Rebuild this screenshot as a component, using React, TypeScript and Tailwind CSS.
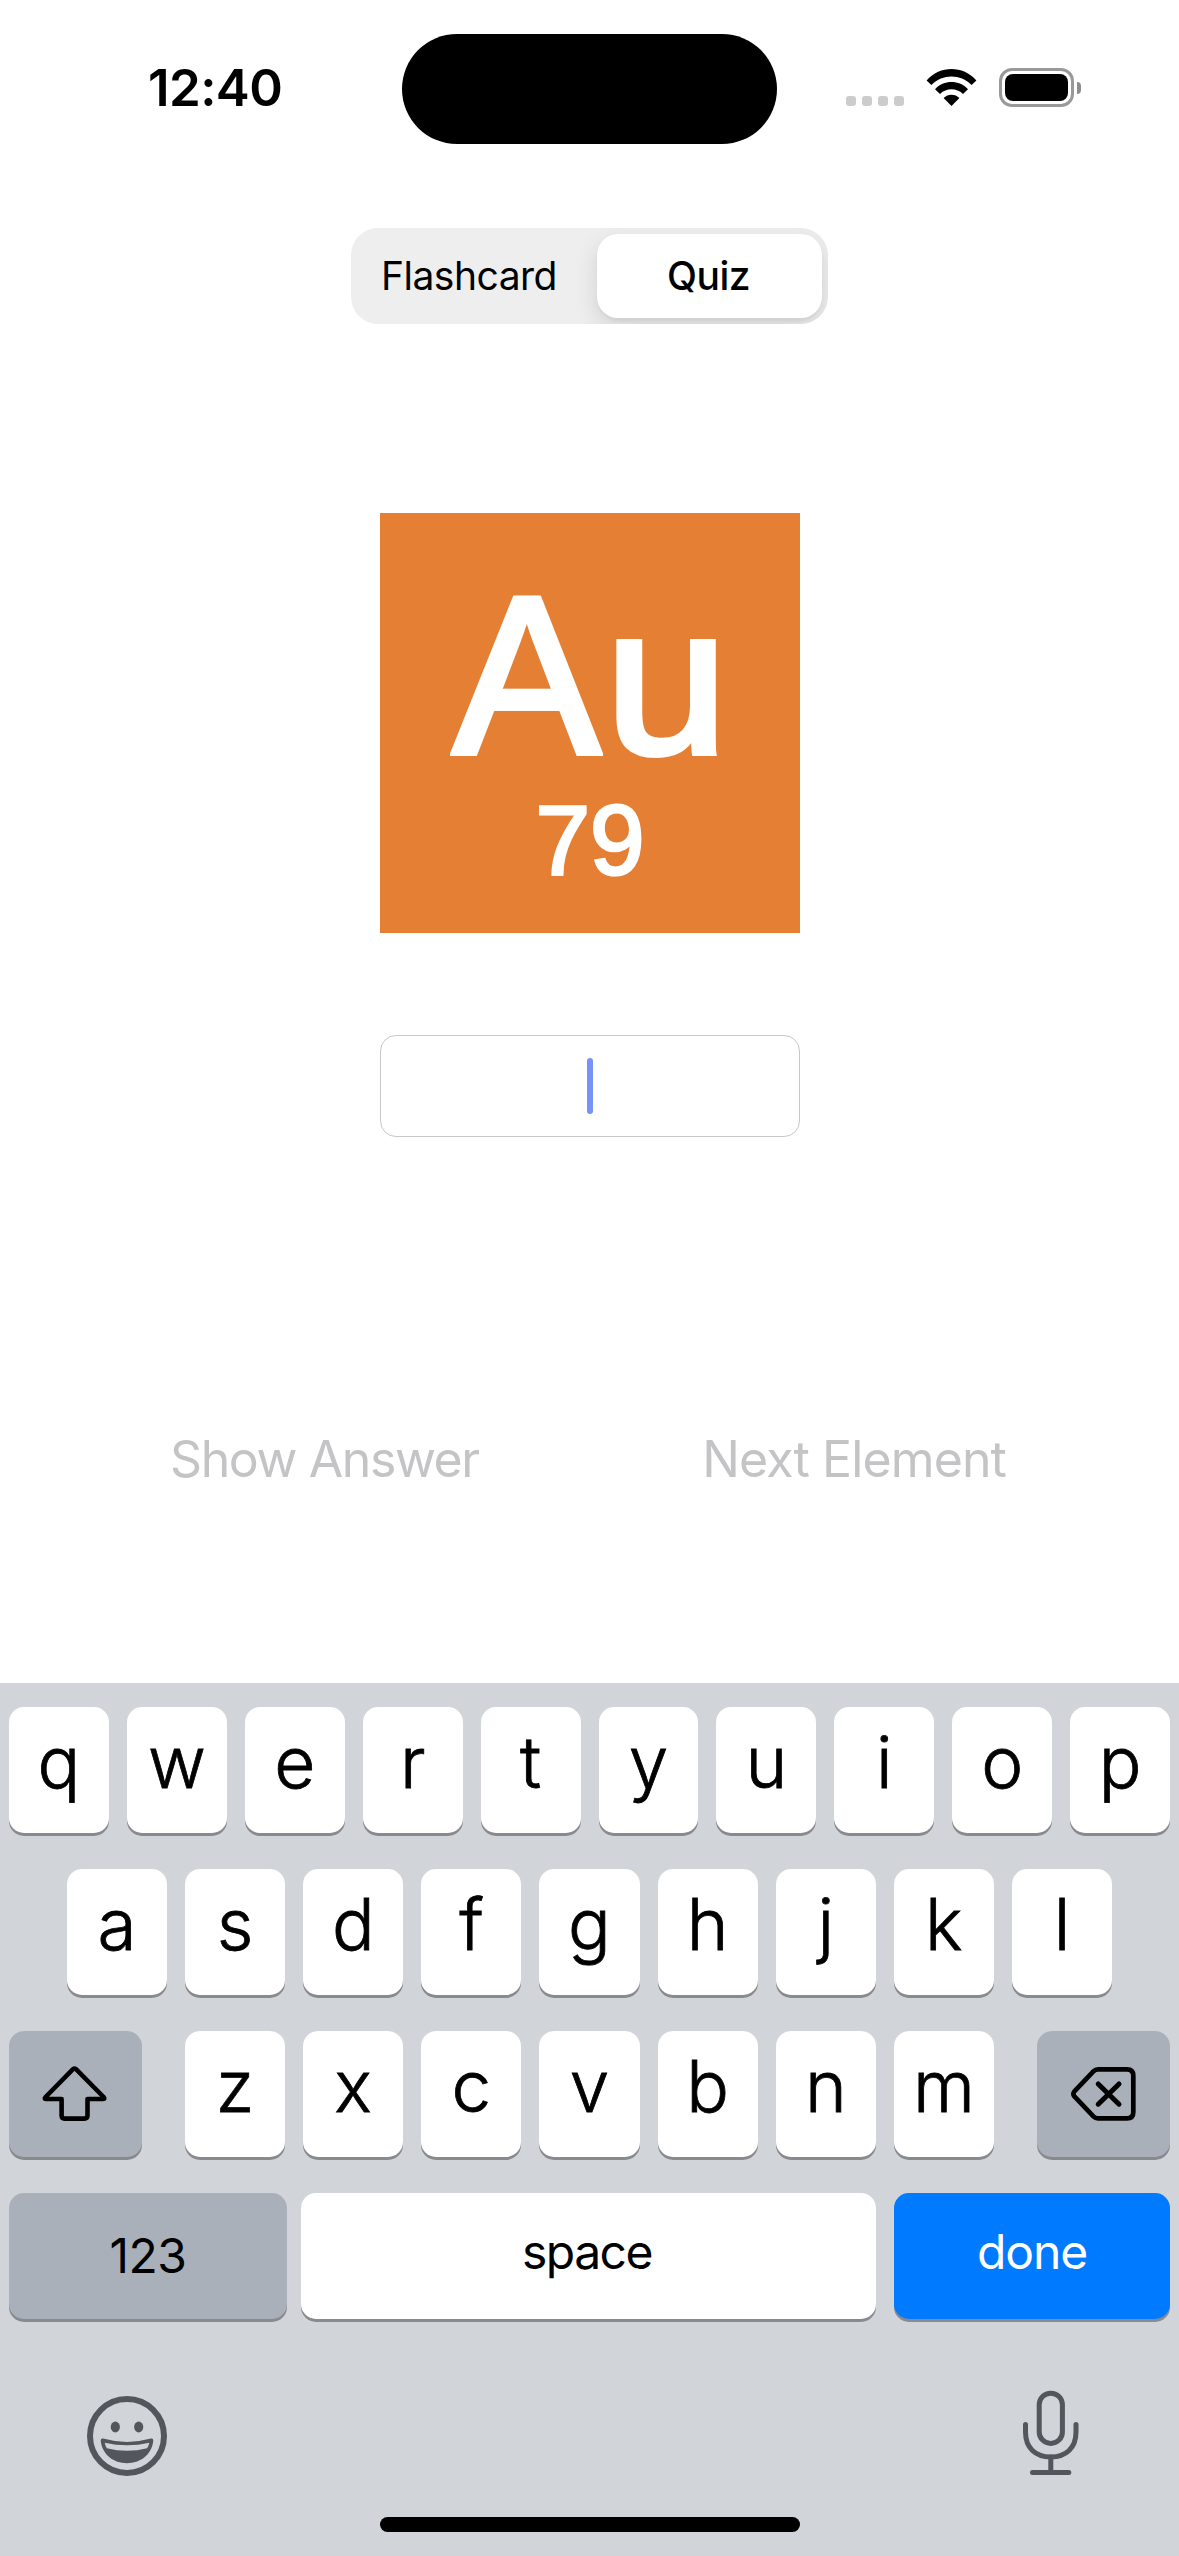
import type { ReactNode } from 'react';

function StatusBar() {
  return (
    <div className="flex h-[178px] shrink-0 items-start justify-between pl-[148px] pr-[98px] pt-[33px]">
      <div className="h-[109px] w-[254px] text-[51px] font-semibold leading-[109px] tracking-[-0.6px]">12:40</div>
      <div className="mt-px h-[110px] w-[375px] rounded-full bg-black" />
      <div className="flex h-[109px] w-[304px] items-center justify-end">
        <div className="mr-[22px] flex gap-[6px] pt-[27px]">
          {[0, 1, 2, 3].map((dot) => (
            <div key={dot} className="size-[10px] rounded-[3px] bg-[#cccccc]" />
          ))}
        </div>
        <svg className="mr-[22px] h-[37px] w-[51px]" viewBox="0 0 51 37">
          <path d="M0.600 11.400 C14 -3.800 37 -3.800 50.400 11.400 L45.600 16 C34.200 4.800 16.800 4.800 5.400 16 Z" />
          <path d="M9 20.200 C17.600 10.600 33.400 10.600 42 20.200 L37 25 C30.400 18.800 20.600 18.800 14 25 Z" />
          <path d="M17.600 29 C21.600 24.500 29.400 24.500 33.400 29 L25.500 37 Z" />
        </svg>
        <div className="flex items-center gap-[3px]">
          <div className="h-[39px] w-[75px] rounded-[13px] border-[3px] border-[#999999] p-[3px]">
            <div className="h-full w-full rounded-[8px] bg-black" />
          </div>
          <div className="h-[12px] w-[4px] rounded-r-full bg-[#8c8c8c]" />
        </div>
      </div>
    </div>
  );
}

function Key({ children, className }: { children: ReactNode; className: string }) {
  return (
    <button
      className={`flex h-[126px] items-center justify-center rounded-[15px] shadow-[0_3px_0_#898a8d] ${className}`}
    >
      {children}
    </button>
  );
}

function Letters({ letters }: { letters: string }) {
  return letters.split('').map((letter) => (
    <Key
      key={letter}
      className="min-w-0 flex-1 bg-white pb-[16px] text-[71px] font-light leading-[110px] [-webkit-text-stroke:0.8px_black]"
    >
      {letter}
    </Key>
  ));
}

function ShiftIcon() {
  return (
    <svg className="h-[126px] w-[133px]" viewBox="0 0 133 126" fill="none" stroke="black" strokeWidth="4.600" strokeLinejoin="round">
      <path d="M67 38.200 L94.600 66 Q96.400 68 94 68 H78.500 V84.500 Q78.500 87.600 75.400 87.600 H55.600 Q52.600 87.600 52.600 84.500 V68 H37 Q34.800 68 36.600 66 L64 38.200 Q65.500 37 67 38.200 Z" />
    </svg>
  );
}

function DeleteIcon() {
  return (
    <svg className="h-[126px] w-[133px]" viewBox="0 0 133 126" fill="none" stroke="black" strokeWidth="4.700" strokeLinejoin="round" strokeLinecap="round">
      <path d="M61 38.300 H90 Q96.300 38.300 96.300 44.500 V81.300 Q96.300 87.400 90 87.400 H61 Q58.400 87.400 56.400 85.400 L37.400 65.400 Q35.400 63 37.400 60.400 L56.400 40.400 Q58.400 38.300 61 38.300 Z" />
      <path d="M61.200 53 L82 73.200 M82 53 L61.200 73.200" strokeWidth="5" />
    </svg>
  );
}

function EmojiIcon() {
  return (
    <svg className="size-[80px]" viewBox="0 0 80 80" fill="#53575d">
      <circle cx="40" cy="40" r="37" fill="none" stroke="#53575d" strokeWidth="6" />
      <ellipse cx="28.300" cy="31" rx="4.600" ry="5.400" />
      <ellipse cx="51.700" cy="31" rx="4.600" ry="5.400" />
      <path
        fillRule="evenodd"
        d="M16.200 42.600 Q40 49.400 63.800 42.600 Q66.600 42.200 66.300 45 C64.500 59 53.500 67.200 40 67.200 C26.500 67.200 15.500 59 13.700 45 Q13.400 42.200 16.200 42.600 Z M17.700 46.700 Q18.300 49.800 19.900 52.200 Q40 57.200 60.100 52.200 Q61.700 49.800 62.300 46.700 Q40 52 17.700 46.700 Z"
      />
    </svg>
  );
}

function MicIcon() {
  return (
    <svg className="h-[90px] w-[60px]" viewBox="0 0 60 90" fill="none" stroke="#53575d" strokeWidth="5" strokeLinecap="round">
      <rect x="18.200" y="5.200" width="23.200" height="50.300" rx="11.600" />
      <path d="M4.500 36.500 V44 C4.500 60 14.500 69 29.800 69 C45 69 55 60 55 44 V36.500" />
      <path d="M29.800 69 V84.400 M11.500 84.400 H47.800" />
    </svg>
  );
}

function Keyboard() {
  return (
    <div className="flex h-[873px] shrink-0 flex-col bg-[#d1d4d9] pt-[24px]">
      <div className="flex flex-col gap-[36px]">
        <div className="flex gap-[18px] px-[9px]">
          <Letters letters="qwertyuiop" />
        </div>
        <div className="flex gap-[18px] px-[67px]">
          <Letters letters="asdfghjkl" />
        </div>
        <div className="flex gap-[43px] px-[9px]">
          <Key className="w-[133px] bg-[#aab0ba]">
            <ShiftIcon />
          </Key>
          <div className="flex flex-1 gap-[18px]">
            <Letters letters="zxcvbnm" />
          </div>
          <Key className="w-[133px] bg-[#aab0ba]">
            <DeleteIcon />
          </Key>
        </div>
        <div className="flex px-[9px]">
          <Key className="mr-[14px] w-[278px] bg-[#aab0ba] text-[48px] tracking-[-0.5px]">123</Key>
          <Key className="mr-[18px] w-[575px] bg-white pb-[8px] pr-[3px] text-[48px] tracking-[-1.5px]">space</Key>
          <Key className="w-[276px] bg-[#007aff] pb-[8px] text-[48px] tracking-[-1.1px] text-white">done</Key>
        </div>
      </div>
      <div className="mt-[69px] flex justify-between pl-[87px] pr-[98px]">
        <div className="pt-[8px]">
          <EmojiIcon />
        </div>
        <MicIcon />
      </div>
      <div className="mx-auto mb-[24px] mt-auto h-[15px] w-[420px] rounded-full bg-black" />
    </div>
  );
}

export default function App() {
  return (
    <div className="flex h-[2556px] w-[1179px] flex-col overflow-hidden bg-white font-['Inter',sans-serif] text-black">
      <StatusBar />
      <div className="mx-auto mt-[50px] flex h-[96px] w-[477px] shrink-0 overflow-hidden rounded-[27px] bg-[#eeeeee] p-[6px] text-[39px] leading-[84px]">
        <div className="w-[240px] pr-[16px] text-center tracking-[-0.5px]">Flashcard</div>
        <div className="w-[225px] rounded-[21px] bg-white pr-[2px] text-center font-medium tracking-[-0.5px] shadow-[0_9px_24px_rgba(0,0,0,0.12),0_3px_3px_rgba(0,0,0,0.04)]">
          Quiz
        </div>
      </div>

      <div className="ml-[380px] mt-[189px] flex h-[420px] w-[420px] shrink-0 flex-col items-center bg-[#e57f34] font-['Liberation_Sans',sans-serif] text-white">
        <div className="mt-[50px] flex h-[225px] items-baseline pr-[3px] text-[225px] leading-[225px] [-webkit-text-stroke:6px_white]">
          <span className="inline-block origin-left scale-x-[0.98]">A</span>
          <span className="inline-block scale-x-[1.05] pl-[5px] text-[210px]">u</span>
        </div>
        <div className="mt-[4px] h-[97px] text-[98px] leading-[97px] [-webkit-text-stroke:3px_white]">79</div>
      </div>

      <div className="ml-[380px] mt-[102px] flex h-[102px] w-[420px] shrink-0 items-center justify-center rounded-[16px] border border-[#c8c8cb]">
        <div className="h-[56px] w-[6px] rounded-full bg-[#7893f8]" />
      </div>

      <div className="mt-[292px] flex h-[60px] shrink-0 justify-between pl-[170px] pr-[173px] text-[50px] leading-[60px] text-[#c4c4c6]">
        <div className="tracking-[-1.4px]">Show Answer</div>
        <div className="tracking-[-0.9px]">Next Element</div>
      </div>

      <div className="flex-1" />
      <Keyboard />
    </div>
  );
}
